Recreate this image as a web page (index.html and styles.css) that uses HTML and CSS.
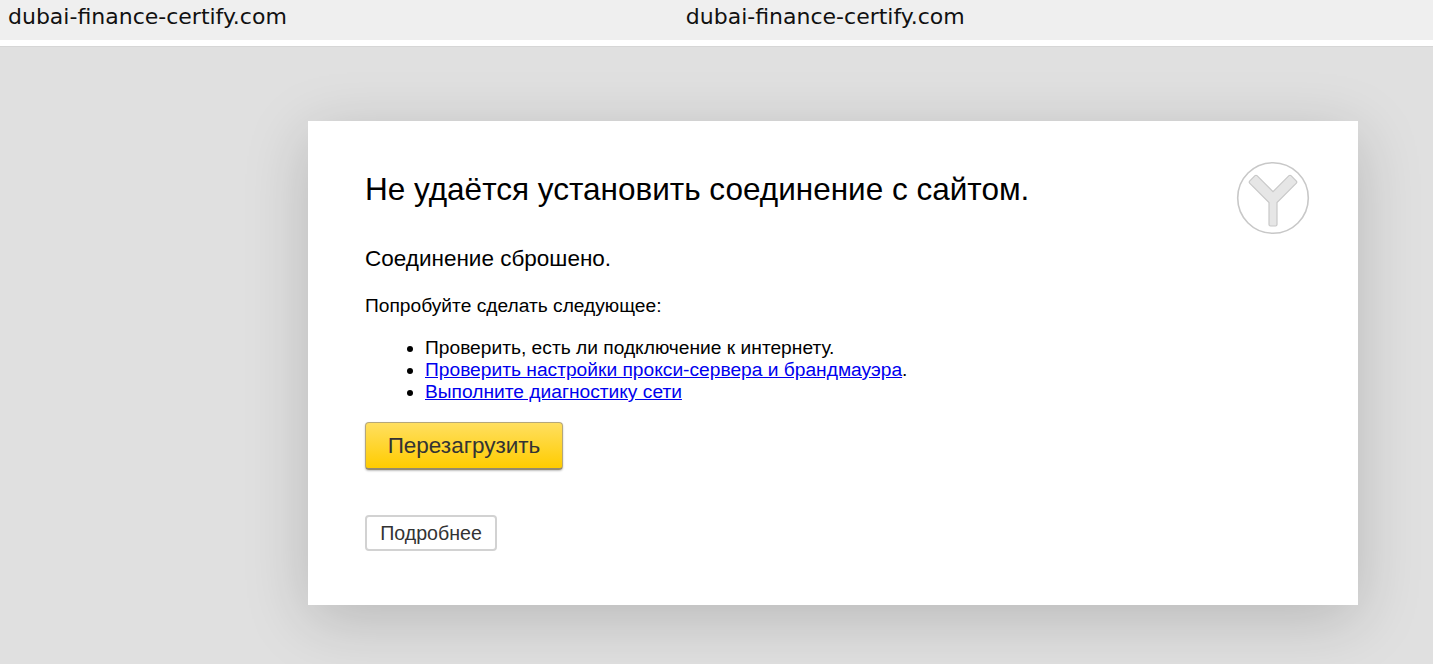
FILE: index.html
```html
<!DOCTYPE html>
<html lang="ru">
<head>
<meta charset="utf-8">
<title>dubai-finance-certify.com</title>
<link rel="stylesheet" href="styles.css">
</head>
<body>
<header class="topbar">
  <div class="tabline">
    <span class="host">dubai-finance-certify.com</span>
    <span class="host">dubai-finance-certify.com</span>
  </div>
</header>
<main class="stage">
  <section class="card">
    <svg class="logo" viewBox="0 0 74 74" aria-hidden="true">
      <circle cx="37" cy="37" r="35.3" fill="#fff" stroke="#c8c8c8" stroke-width="1.6"/>
      <path d="M33 63.5V41.5L13.6 22.1a1.4 1.4 0 0 1 0-2l5.4-5.4a1.4 1.4 0 0 1 2 0L37 30.7l16-16a1.4 1.4 0 0 1 2 0l5.4 5.4a1.4 1.4 0 0 1 0 2L41 41.5v22a1.5 1.5 0 0 1-1.5 1.5h-5A1.5 1.5 0 0 1 33 63.5z" fill="#e6e6e6" stroke="#c8c8c8" stroke-width="1.2"/>
    </svg>
    <h1 class="title">Не удаётся установить соединение с сайтом.</h1>
    <h2 class="subtitle">Соединение сброшено.</h2>
    <p class="lead">Попробуйте сделать следующее:</p>
    <ul class="tips">
      <li>Проверить, есть ли подключение к интернету.</li>
      <li><a href="#">Проверить настройки прокси-сервера и брандмауэра</a>.</li>
      <li><a href="#">Выполните диагностику сети</a></li>
    </ul>
    <button class="btn-reload" type="button">Перезагрузить</button>
    <button class="btn-more" type="button">Подробнее</button>
  </section>
</main>
</body>
</html>
```
FILE: styles.css
```css
* { box-sizing: border-box; }
html, body { height: 100%; }
body {
  margin: 0;
  display: flex;
  flex-direction: column;
  height: 664px;
  overflow: hidden;
  background: #e0e0e0;
  font-family: "Liberation Sans", Arial, sans-serif;
  color: #000;
}
.topbar {
  flex: none;
  height: 47px;
  background: #fff;
  border-bottom: 1px solid #d6d6d6;
}
.tabline {
  height: 40px;
  background: #efefef;
  display: flex;
  gap: 399px;
  padding-left: 8px;
}
.host {
  font-family: "DejaVu Sans", sans-serif;
  font-size: 22px;
  line-height: 34px;
  color: #111;
}
.stage {
  flex: 1;
  padding: 74px 75px 0 308px;
}
.card {
  position: relative;
  height: 484px;
  background: #fff;
  padding: 50px 57px 0;
  box-shadow: 0 14px 60px rgba(0,0,0,.18);
}
.logo {
  position: absolute;
  top: 40px;
  right: 48px;
  width: 74px;
  height: 74px;
}
.title {
  margin: 0;
  font-size: 31.5px;
  font-weight: 400;
  line-height: 37px;
}
.subtitle {
  margin: 37px 0 0;
  font-size: 22.5px;
  font-weight: 400;
  line-height: 28px;
}
.lead {
  margin: 21px 0 0;
  font-size: 19.2px;
  line-height: 24px;
}
.tips {
  margin: 19px 0 0;
  padding-left: 60px;
  font-size: 19.2px;
  line-height: 22px;
}
.tips a { color: #00e; text-decoration: underline; }
.btn-reload {
  display: block;
  margin-top: 19px;
  width: 198px;
  height: 48px;
  padding: 0;
  border: 1px solid #b5a77a;
  border-bottom: 2px solid #948a70;
  border-radius: 4px;
  background: linear-gradient(#ffdf60, #ffcc00);
  box-shadow: 0 1px 2px rgba(0,0,0,.25);
  font: 22.5px "Liberation Sans", Arial, sans-serif;
  color: #333;
}
.btn-more {
  display: block;
  margin-top: 45px;
  width: 132px;
  height: 36px;
  padding: 0;
  border: 2px solid #d2d2d2;
  border-radius: 4px;
  background: #fff;
  font: 19.6px "Liberation Sans", Arial, sans-serif;
  color: #333;
}
```
